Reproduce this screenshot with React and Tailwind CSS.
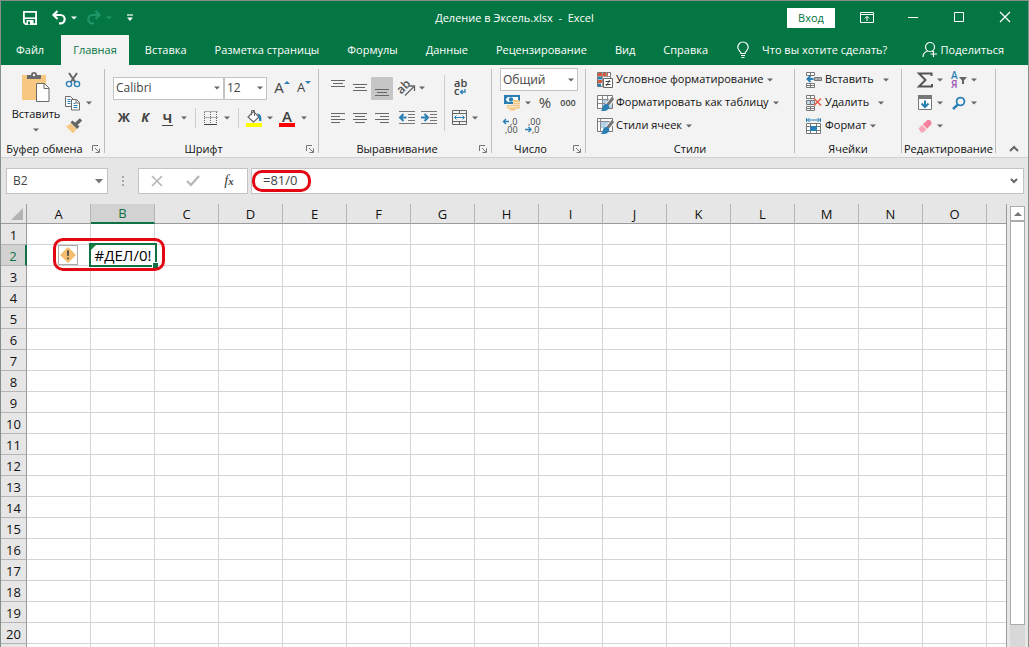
import React from 'react';

const TABS = ['Файл', 'Главная', 'Вставка', 'Разметка страницы', 'Формулы', 'Данные', 'Рецензирование', 'Вид', 'Справка'];
const COLUMNS = 'ABCDEFGHIJKLMNO'.split('');
const ROWS = Array.from({ length: 20 }, (_, i) => i + 1);

const Svg = ({ w = 16, h = 16, children }) => (
  <svg width={w} height={h} viewBox={`0 0 ${w} ${h}`} fill="none" className="shrink-0 overflow-visible" aria-hidden="true">
    {children}
  </svg>
);

const CaretIcon = ({ color = '#666' }) => (
  <Svg w={6} h={4}>
    <path d="M0 0.5h6L3 3.5z" fill={color} />
  </Svg>
);

const Caret = ({ label = 'Ещё' }) => (
  <button type="button" aria-label={label} className="flex w-2 h-5 shrink-0 items-center justify-center">
    <CaretIcon />
  </button>
);

const Tool = ({ label, className = 'w-[22px] items-center', children }) => (
  <button type="button" aria-label={label} className={`flex h-[23px] shrink-0 justify-center text-[#444] ${className}`}>
    {children}
  </button>
);

/* ---------- icons ---------- */

const SaveIcon = () => (
  <Svg>
    <path d="M1.9 1.9h12.2v12.2H3.5l-1.6-1.6z" stroke="#fff" strokeWidth="1.8" />
    <path d="M2 8.2h12" stroke="#fff" strokeWidth="1.6" />
    <path d="M4.5 10h7v4.5h-7z" fill="#fff" />
    <path d="M6 11.5h2v3H6z" fill="#037643" />
  </Svg>
);

const UndoIcon = () => (
  <Svg>
    <path d="M6.5 1 2.5 5l4 4M3 5h6.5a4.2 4.2 0 0 1 0 8.4H8" stroke="#fff" strokeWidth="2.2" />
  </Svg>
);

const RedoIcon = () => (
  <Svg>
    <path d="M9.5 1l4 4-4 4M13 5H6.5a4.2 4.2 0 0 0 0 8.4H8" stroke="#1f9668" strokeWidth="2.2" />
  </Svg>
);

const QuickMenuIcon = () => (
  <Svg w={8} h={8}>
    <path d="M1 1h6" stroke="#fff" strokeWidth="1.2" />
    <path d="M1 3.5h6L4 7z" fill="#fff" />
  </Svg>
);

const RibbonOptionsIcon = () => (
  <Svg w={14} h={12}>
    <path d="M.5.5h13v10H.5zM.5 2.500h13M7 9V4.500M4.800 6.500 7 4.300l2.200 2.200" stroke="#fff" />
  </Svg>
);

const BulbIcon = () => (
  <Svg w={14} h={18}>
    <path d="M5 12.500c0-2-3.200-3-3.200-6.300a5.200 5.200 0 0 1 10.400 0c0 3.300-3.200 4.300-3.200 6.300zM5 14.500h4M5.500 16.500h3" stroke="#fff" strokeWidth="1.200" />
  </Svg>
);

const ShareIcon = () => (
  <Svg w={16} h={18}>
    <circle cx="8" cy="6" r="4.500" stroke="#fff" strokeWidth="1.200" />
    <path d="M1 16c0-3 2-5.200 4.800-6M10 10l1.500 1M11.500 10v6M8.500 13h6.500" stroke="#fff" strokeWidth="1.200" />
  </Svg>
);

const PasteIcon = () => (
  <Svg w={28} h={30}>
    <path d="M0 3h24v25H0z" fill="#f8c881" />
    <path d="M5 7V3h4a3 3 0 0 1 6 0h4v4z" fill="#6a6a6a" />
    <circle cx="12" cy="3" r="1.200" fill="#f3f3f3" />
    <path d="M14.500 11.500h8l4.500 4.500v13.500H14.500z" fill="#fff" stroke="#6a6a6a" />
    <path d="M22 11.500V16.500h5" stroke="#6a6a6a" />
  </Svg>
);

const CutIcon = () => (
  <Svg>
    <path d="M4 1l6.500 9.500M12 1 5.500 10.500" stroke="#666" strokeWidth="2" />
    <circle cx="4" cy="12" r="2.600" stroke="#2a80b5" strokeWidth="1.400" />
    <circle cx="12" cy="12" r="2.600" stroke="#2a80b5" strokeWidth="1.400" />
  </Svg>
);

const CopyIcon = () => (
  <Svg>
    <path d="M.5 1.500h5l2.500 2.500v7.500H.500z" fill="#fff" stroke="#6a6a6a" />
    <path d="M2.500 4.500h3M2.500 6.500h3M2.500 8.500h3" stroke="#2a80b5" />
    <path d="M6.500 4.500h5l3 3v7.500h-8z" fill="#fff" stroke="#6a6a6a" />
    <path d="M11 4.500v3.500h3.500" stroke="#6a6a6a" />
    <path d="M8.500 8.500h2M8.500 10.500h4M8.500 12.500h4" stroke="#2a80b5" />
  </Svg>
);

const BrushIcon = () => (
  <Svg>
    <path d="M0 8.500l5-3 5.500 5.500L7 15.500z" fill="#f8c881" />
    <path d="M4.500 4.500l2-2 7 6-2.500 2.500z" fill="#666" />
    <path d="M9.500 6.500 15 1.500" stroke="#666" strokeWidth="3.400" />
  </Svg>
);

const LauncherIcon = () => (
  <Svg w={8} h={8}>
    <path d="M.5 6V.5H6M3 3l4 4M7.500 3.500v4h-4" stroke="#777" />
  </Svg>
);

const GrowFontIcon = ({ shrink }) => (
  <Svg w={6} h={4}>
    <path d={shrink ? 'M0 0h6L3 3z' : 'M0 3h6L3 0z'} fill="#2a80b5" />
  </Svg>
);

const BordersIcon = () => (
  <Svg w={14} h={14}>
    <path d="M.5.5h13M.5 6.500h13M.5 1v12M6.500 1v12M12.500 1v12" stroke="#666" strokeDasharray="1 1" />
    <path d="M0 13.500h13" stroke="#444" />
  </Svg>
);

const FillIcon = () => (
  <Svg w={16} h={18}>
    <path d="M7.500 2.500 13 8l-5.500 5L2 8z" fill="#fff" stroke="#666" strokeWidth="1.200" />
    <path d="M5.500 6V1.500h3V7" stroke="#666" />
    <path d="M11 4.500c3.500 0 5 3 4.300 7.500l-2.300 0V8z" fill="#2a80b5" />
    <path d="M0 14h16v4H0z" fill="#ffff00" />
  </Svg>
);

const LINES = {
  top: [[1, 0, 14], [4, 2, 12], [7, 0, 14]],
  middle: [[5, 0, 14], [8, 2, 12], [11, 0, 14]],
  bottom: [[10, 0, 14], [13, 2, 12], [16, 0, 14]],
  left: [[4, 0, 14], [7, 0, 9], [10, 0, 14], [13, 0, 9]],
  center: [[4, 0, 14], [7, 2, 12], [10, 0, 14], [13, 2, 12]],
  right: [[4, 0, 14], [7, 5, 14], [10, 0, 14], [13, 5, 14]],
};

const AlignIcon = ({ kind }) => (
  <Svg w={14} h={16}>
    {LINES[kind].map(([y, a, b]) => (
      <path key={y} d={`M${a} ${y - 0.5}H${b}`} stroke="#666" />
    ))}
  </Svg>
);

const OrientationIcon = () => (
  <Svg w={18} h={18}>
    <text x="0" y="12" fontSize="12" fontFamily="Open Sans, sans-serif" fontWeight="600" fill="#555" transform="rotate(-45 6 10)">ab</text>
    <path d="M7 16.500 16 7.500M11.500 7H16.500v5" stroke="#666" strokeWidth="1.300" />
  </Svg>
);

const IndentIcon = ({ out }) => (
  <Svg>
    <path d="M0 1.500h16M9 4.500h7M9 7.500h7M9 10.500h7M0 13.500h16" stroke="#777" />
    <path d={out ? 'M7.500 7.500H2M4.500 4 1 7.500 4.500 11' : 'M0 7.500h5.500M3.500 4 7 7.500 3.500 11'} stroke="#2a80b5" strokeWidth="2" />
  </Svg>
);

const WrapIcon = () => (
  <Svg w={14} h={18}>
    <text x="1" y="8" fontSize="11" fontFamily="Open Sans, sans-serif" fontWeight="600" fill="#444">ab</text>
    <text x="1" y="16" fontSize="11" fontFamily="Open Sans, sans-serif" fontWeight="600" fill="#444">c</text>
    <path d="M12 10v3H8M9.500 11 7.500 13l2 2" stroke="#2a80b5" strokeWidth="1.300" />
  </Svg>
);

const MergeIcon = () => (
  <Svg>
    <path d="M.5.5h14v14H.5zM.5 3.500h14M.5 11.500h14M7.500.5v3M7.500 11.500v3" stroke="#666" />
    <path d="M2.500 7.500h10M4.500 5.500l-2 2 2 2M10.500 5.500l2 2-2 2" stroke="#2a80b5" />
  </Svg>
);

const MoneyIcon = () => (
  <Svg>
    <path d="M0 0h16v9H0z" fill="#2a80b5" />
    <path d="M2 2h12v5H2z" fill="#fff" />
    <path d="M2 2h2L2 4zM2 7V5l2 2z" fill="#2a80b5" />
    <circle cx="7" cy="4.500" r="2.200" fill="#2a80b5" />
    <path d="M9 5h6l1 1.500V13l-3 1H4l-1-1v-3h6z" fill="#f8c881" />
    <path d="M9 7.500h7M9 9.500h7M4 11.500h12M4 13h9" stroke="#f3f3f3" strokeWidth=".6" />
    <path d="M5 13.500h7l-1 2H6z" fill="#f8c881" />
  </Svg>
);

const DecimalIcon = ({ less }) => (
  <Svg w={16} h={16}>
    <text x={less ? 3 : 7} y="7" fontSize="9" fontFamily="Open Sans, sans-serif" fill="#444">{less ? ',00' : ',0'}</text>
    <text x={less ? 7 : 2} y="15" fontSize="9" fontFamily="Open Sans, sans-serif" fill="#444">{less ? ',0' : ',00'}</text>
    <path d={less ? 'M0 11.500h5.500M3.500 9 6 11.500 3.500 14' : 'M6 3.500H.800M3 1 .500 3.500 3 6'} stroke="#2a80b5" strokeWidth="1.400" />
  </Svg>
);

const ConditionalIcon = () => (
  <Svg>
    <path d="M.5.5h13v14H.500z" fill="#fff" stroke="#777" />
    <path d="M1 1h4v3H1zM6 1h5v3H6zM1 8h4v3H1z" fill="#d9593d" />
    <path d="M1 4.500h4v3H1zM1 11.500h3v3H1z" fill="#2a80b5" />
    <path d="M5.500 0v14M9.500 0v5M0 4.500h14" stroke="#999" />
    <path d="M6.500 6.500h9v9h-9z" fill="#fff" stroke="#666" />
    <path d="M8.500 9.500h5M8.500 12.500h5M12.500 8l-3 6" stroke="#444" />
  </Svg>
);

const TableStyleIcon = ({ cell }) => (
  <Svg>
    <path d="M.5.500h15v13H.500z" fill="#fff" stroke="#777" />
    <path d={cell ? 'M4 4h8v6H4z' : 'M5 5h10v8H5z'} fill="#b5d1e6" />
    <path d={cell ? 'M.5 3.500h15M3.500.500v13' : 'M.5 4.500h15M.5 8.500h15M5.500.500v13M10.500.500v13'} stroke="#8a8a8a" />
    <path d="M16 3.500 10 10.500" stroke="#f3f3f3" strokeWidth="5" />
    <path d="M16 3 10.500 10" stroke="#777" strokeWidth="3" />
    <path d="M8.500 9c2-.5 4.500 1.500 3.700 4-.8 2.200-4 3.500-8.700 3C6.500 14.500 5 10 8.500 9z" fill="#2a80b5" />
  </Svg>
);

const CellsIcon = ({ kind }) => (
  <Svg>
    <path d="M.5.500h8v3h-8zM4.500.500v3M.5 11.500h8v4h-8zM4.500 11.500v4M.5 13.500h8" fill="#fff" stroke="#777" />
    {kind === 'insert' ? (
      <>
        <path d="M8.500 5.500h7v3h-7zM12 5.500v3" fill="#bbb" stroke="#777" />
        <path d="M7.500 7H1.500M4.500 4l-3 3 3 3" stroke="#2a80b5" strokeWidth="2" />
      </>
    ) : (
      <>
        <path d="M.5 5.500h8v4h-8zM4.500 5.500v4" fill="#c3d9ea" stroke="#777" />
        <path d="M8 3.500l7 7M15 3.500l-7 7" stroke="#e8604c" strokeWidth="1.700" />
      </>
    )}
  </Svg>
);

const FormatIcon = () => (
  <Svg>
    <path d="M1.500 2h12M3.500 0 1.500 2l2 2M11.500 0l2 2-2 2M.5 0v4M14.500 0v4" stroke="#2a80b5" />
    <path d="M.5 5.500h14v10H.500zM.5 8.500h14M.5 12.500h14M4.500 5.500v10M10.500 5.500v10" fill="#fff" stroke="#777" />
    <path d="M4 8h7v5H4z" fill="#2a80b5" />
  </Svg>
);

const SumIcon = () => (
  <Svg>
    <path d="M14.500 4V1.500H2L8.500 8 2 14.500h13V12" stroke="#555" strokeWidth="2" />
  </Svg>
);

const FillDownIcon = () => (
  <Svg w={14} h={16}>
    <path d="M.5.500h13v14H.500z" fill="#fff" stroke="#777" />
    <path d="M0 0h14v4H0z" fill="#777" />
    <path d="M7 5.500V12M3.500 8.500 7 12l3.500-3.500" stroke="#2a80b5" strokeWidth="2" />
  </Svg>
);

const EraserIcon = () => (
  <Svg w={14} h={14}>
    <path d="M.5 9.500 4 6l4.500 4.500L5 13.500H3z" fill="#f7a6ba" />
    <path d="M4.800 5.300 9.500 1H12l1.500 2.500V5L9.200 9.700z" fill="#f4829f" />
  </Svg>
);

const SortIcon = () => (
  <Svg w={16} h={18}>
    <text x="0" y="8" fontSize="10" fontWeight="600" fontFamily="Open Sans, sans-serif" fill="#2a80b5">А</text>
    <text x="0" y="17" fontSize="10" fontWeight="600" fontFamily="Open Sans, sans-serif" fill="#9a55b5">Я</text>
    <path d="M8 6h8l-3 3.500V13h-2V9.500z" fill="#666" />
  </Svg>
);

const SearchIcon = () => (
  <Svg w={14} h={14}>
    <circle cx="8.500" cy="5.500" r="3.900" stroke="#2a80b5" strokeWidth="1.800" />
    <path d="M6 8.500 1 13" stroke="#2a80b5" strokeWidth="2.400" />
  </Svg>
);

const ChevronIcon = ({ up }) => (
  <Svg w={10} h={8}>
    <path d={up ? 'M1 6l4-4 4 4' : 'M2 2l3 3 3-3'} stroke="#666" strokeWidth="2" />
  </Svg>
);

/* ---------- ribbon ---------- */

const Group = ({ title, launcher, className, children }) => (
  <>
    <section aria-label={title} className={`flex shrink-0 flex-col ${className}`}>
      <div className="flex-1">{children}</div>
      <div className="flex h-4 items-center">
        <span className={`flex-1 text-center whitespace-nowrap ${launcher ? 'pr-1' : ''}`}>{title}</span>
        {launcher && (
          <button type="button" aria-label={`${title}: параметры`} className="w-3">
            <LauncherIcon />
          </button>
        )}
      </div>
    </section>
    <div className="my-1 w-px shrink-0 bg-[#bdbdbd]" />
  </>
);

const Row = ({ tall, className = '', children }) => (
  <div className={`flex items-center ${tall ? 'h-[30px]' : 'h-[23px]'} ${className}`}>{children}</div>
);

const Divider = () => <div className="mr-[3px] ml-[7px] h-5 w-px bg-[#cfcfcf]" />;

const Select = ({ label, value, className }) => (
  <div className={`relative h-[23px] shrink-0 text-xs ${className}`}>
    <select aria-label={label} defaultValue={value} className="h-full w-full appearance-none border border-[#c3c3c3] bg-white pl-[2px] text-[#444]">
      <option>{value}</option>
    </select>
    <span className="pointer-events-none absolute inset-y-0 right-1 flex items-center">
      <CaretIcon />
    </span>
  </div>
);

const MenuButton = ({ icon, text, gap = 'gap-1' }) => (
  <button type="button" className="flex h-[23px] items-center gap-[3px] whitespace-nowrap">
    {icon}
    <span className={`flex items-center ${gap}`}>
      {text}
      <CaretIcon />
    </span>
  </button>
);

const Ribbon = () => (
  <div className="flex h-[93px] shrink-0 border-b border-[#d0d0d0] bg-[#f3f3f3] text-[#111]">
    <Group title="Буфер обмена" launcher className="w-[103px]">
      <div className="flex pt-[3px]">
        <button type="button" className="flex w-[62px] flex-col items-center pt-1 pl-2">
          <PasteIcon />
          <span className="pt-1 leading-4">Вставить</span>
          <span className="flex h-4 items-center">
            <CaretIcon />
          </span>
        </button>
        <div>
          <Row><Tool label="Вырезать" className="w-5 items-center"><CutIcon /></Tool></Row>
          <Row className="gap-[2px]">
            <Tool label="Копировать" className="w-5 items-center"><CopyIcon /></Tool>
            <Caret label="Параметры копирования" />
          </Row>
          <Row><Tool label="Формат по образцу"><BrushIcon /></Tool></Row>
        </div>
      </div>
    </Group>

    <Group title="Шрифт" launcher className="w-[213px]">
      <div className="pt-2 pl-2">
        <Row tall>
          <Select label="Шрифт" value="Calibri" className="w-[111px]" />
          <Select label="Размер шрифта" value="12" className="w-[43px]" />
          <Tool label="Увеличить размер шрифта" className="ml-1 w-[22px] items-start">
            <span className="text-[15px] leading-5 font-medium">A</span>
            <span className="pt-1"><GrowFontIcon /></span>
          </Tool>
          <Tool label="Уменьшить размер шрифта" className="w-[22px] items-start">
            <span className="text-[13px] leading-5 font-medium">A</span>
            <span className="pt-1"><GrowFontIcon shrink /></span>
          </Tool>
        </Row>
        <Row tall>
          <Tool label="Полужирный"><span className="text-[13px] font-bold">Ж</span></Tool>
          <Tool label="Курсив" className="w-5 items-center"><span className="text-[13px] font-bold italic">К</span></Tool>
          <Tool label="Подчёркнутый" className="w-[25px] items-center">
            <span className="border-b border-[#444] px-px text-[13px] leading-[14px] font-bold">Ч</span>
          </Tool>
          <Caret />
          <Divider />
          <Tool label="Границы" className="w-6 items-center"><BordersIcon /></Tool>
          <Caret />
          <Divider />
          <Tool label="Цвет заливки" className="w-6 items-center"><FillIcon /></Tool>
          <Caret />
          <Tool label="Цвет текста" className="w-[26px] items-center">
            <span className="flex w-4 justify-center border-b-4 border-[#fe0000] text-[15px] leading-[14px] font-semibold">A</span>
          </Tool>
          <Caret />
        </Row>
      </div>
    </Group>

    <Group title="Выравнивание" launcher className="w-[172px]">
      <div className="flex pt-2 pl-2">
        <div className="w-[117px]">
          <Row tall>
            <Tool label="По верхнему краю"><AlignIcon kind="top" /></Tool>
            <Tool label="По середине"><AlignIcon kind="middle" /></Tool>
            <Tool label="По нижнему краю" className="w-[22px] items-center bg-[#c6c6c6]"><AlignIcon kind="bottom" /></Tool>
            <Tool label="Ориентация" className="ml-[3px] w-[22px] items-center"><OrientationIcon /></Tool>
            <Caret />
          </Row>
          <Row tall>
            <Tool label="По левому краю"><AlignIcon kind="left" /></Tool>
            <Tool label="По центру"><AlignIcon kind="center" /></Tool>
            <Tool label="По правому краю"><AlignIcon kind="right" /></Tool>
            <Tool label="Уменьшить отступ" className="ml-[3px] w-[22px] items-center"><IndentIcon out /></Tool>
            <Tool label="Увеличить отступ"><IndentIcon /></Tool>
          </Row>
        </div>
        <div className="my-[2px] w-px bg-[#cfcfcf]" />
        <div className="pl-1">
          <Row tall><Tool label="Перенести текст"><WrapIcon /></Tool></Row>
          <Row tall>
            <Tool label="Объединить и поместить в центре"><MergeIcon /></Tool>
            <Caret />
          </Row>
        </div>
      </div>
    </Group>

    <Group title="Число" launcher className="w-[93px]">
      <div className="pt-[3px] pl-2">
        <Select label="Числовой формат" value="Общий" className="w-[78px]" />
        <Row>
          <Tool label="Финансовый формат" className="w-6 items-center"><MoneyIcon /></Tool>
          <Caret />
          <Tool label="Процентный формат" className="w-[26px] items-center"><span className="text-[15px]">%</span></Tool>
          <Tool label="Формат с разделителями" className="w-5 items-center"><span className="text-[9px] font-semibold">000</span></Tool>
        </Row>
        <Row>
          <Tool label="Увеличить разрядность"><DecimalIcon /></Tool>
          <Tool label="Уменьшить разрядность"><DecimalIcon less /></Tool>
        </Row>
      </div>
    </Group>

    <Group title="Стили" className="w-[208px]">
      <div className="pt-[3px] pl-[11px]">
        <MenuButton icon={<ConditionalIcon />} text="Условное форматирование" />
        <MenuButton icon={<TableStyleIcon />} text="Форматировать как таблицу" />
        <MenuButton icon={<TableStyleIcon cell />} text="Стили ячеек" />
      </div>
    </Group>

    <Group title="Ячейки" className="w-[106px]">
      <div className="pt-[3px] pl-[11px]">
        <MenuButton icon={<CellsIcon kind="insert" />} text="Вставить" gap="gap-[9px]" />
        <MenuButton icon={<CellsIcon kind="delete" />} text="Удалить" gap="gap-[9px]" />
        <MenuButton icon={<FormatIcon />} text="Формат" />
      </div>
    </Group>

    <Group title="Редактирование" className="w-[93px]">
      <div className="pt-[3px] pl-3">
        <Row>
          <Tool label="Сумма"><SumIcon /></Tool>
          <Caret />
          <Tool label="Сортировка и фильтр" className="ml-1 w-[22px] items-center"><SortIcon /></Tool>
          <Caret />
        </Row>
        <Row>
          <Tool label="Заполнить"><FillDownIcon /></Tool>
          <Caret />
          <Tool label="Найти и выделить" className="ml-1 w-[22px] items-center"><SearchIcon /></Tool>
          <Caret />
        </Row>
        <Row>
          <Tool label="Очистить"><EraserIcon /></Tool>
          <Caret />
        </Row>
      </div>
    </Group>

    <div className="flex flex-1 items-end justify-end pr-[9px] pb-1">
      <button type="button" aria-label="Свернуть ленту"><ChevronIcon up /></button>
    </div>
  </div>
);

/* ---------- window chrome ---------- */

const TitleBar = () => (
  <header className="grid h-[34px] shrink-0 grid-cols-[1fr_auto_1fr] items-center">
    <div className="flex items-center pl-[21px]">
      <button type="button" aria-label="Сохранить"><SaveIcon /></button>
      <button type="button" aria-label="Отменить" className="ml-[13px] flex items-center gap-1"><UndoIcon /><CaretIcon color="#fff" /></button>
      <button type="button" aria-label="Вернуть" className="ml-[9px] flex items-center gap-1"><RedoIcon /><CaretIcon color="#1f9668" /></button>
      <button type="button" aria-label="Настройка панели" className="ml-[14px]"><QuickMenuIcon /></button>
    </div>
    <h1 className="whitespace-pre">Деление в Эксель.xlsx  -  Excel</h1>
    <div className="flex items-center justify-end">
      <button type="button" className="mr-[9px] h-5 w-12 bg-white text-[#037643]">Вход</button>
      <button type="button" aria-label="Параметры ленты" className="flex w-[46px] justify-center"><RibbonOptionsIcon /></button>
      <button type="button" aria-label="Свернуть" className="flex w-[46px] justify-center">
        <Svg w={10} h={10}><path d="M0 4.500h10" stroke="#fff" /></Svg>
      </button>
      <button type="button" aria-label="Развернуть" className="flex w-[46px] justify-center">
        <Svg w={10} h={10}><path d="M.5-.5h9v9h-9z" stroke="#fff" /></Svg>
      </button>
      <button type="button" aria-label="Закрыть" className="flex w-[46px] justify-center">
        <Svg w={10} h={10}><path d="M0-1l10 10M10-1 0 9" stroke="#fff" strokeWidth="1.200" /></Svg>
      </button>
    </div>
  </header>
);

const TabBar = () => (
  <nav className="flex h-[30px] shrink-0 pl-[3px]">
    {TABS.map((tab) => (
      <button
        key={tab}
        type="button"
        className={`mr-1 px-3 whitespace-nowrap ${tab === 'Главная' ? 'ml-px bg-[#f3f3f3] text-[#037643]' : ''}`}
      >
        {tab}
      </button>
    ))}
    <button type="button" className="ml-3 flex items-center gap-3 whitespace-nowrap"><BulbIcon />Что вы хотите сделать?</button>
    <button type="button" className="mr-6 ml-auto flex items-center gap-[3px]"><ShareIcon />Поделиться</button>
  </nav>
);

const FormulaBar = () => (
  <div className="flex h-[46px] shrink-0 items-center bg-[#e6e6e6] pr-1 pl-[5px] text-xs text-[#444]">
    <div className="flex h-[26px] w-[102px] items-center border border-[#c3c3c3] bg-white pr-1 pl-[6px]">
      <input aria-label="Имя ячейки" defaultValue="B2" className="w-full min-w-0 bg-transparent outline-none" />
      <button type="button" aria-label="Список имён">
        <Svg w={8} h={5}><path d="M0 0h8L4 4.500z" fill="#777" /></Svg>
      </button>
    </div>
    <div className="flex w-[30px] justify-center">
      <Svg w={2} h={12}><path d="M0 1h2v2H0zM0 5h2v2H0zM0 9h2v2H0z" fill="#aaa" /></Svg>
    </div>
    <div className="flex h-[26px] w-[110px] items-center border border-[#c3c3c3] bg-white">
      <button type="button" aria-label="Отмена" className="flex w-9 justify-center">
        <Svg w={12} h={12}><path d="M1 1l10 10M11 1 1 11" stroke="#b5b5b5" strokeWidth="1.600" /></Svg>
      </button>
      <button type="button" aria-label="Ввод" className="flex w-9 justify-center">
        <Svg w={14} h={12}><path d="M1 6l4 4 8-9" stroke="#b5b5b5" strokeWidth="2.200" /></Svg>
      </button>
      <button type="button" aria-label="Вставить функцию" className="w-9 font-['Liberation_Serif',serif] text-[15px] italic">
        f<span className="text-[11px] font-bold">x</span>
      </button>
    </div>
    <div className="relative ml-[3px] flex h-[26px] flex-1 items-center border border-[#c3c3c3] bg-white pr-1 pl-[11px]">
      <input aria-label="Строка формул" defaultValue="=81/0" className="min-w-0 flex-1 bg-transparent text-[13px] outline-none" />
      <button type="button" aria-label="Развернуть строку формул"><ChevronIcon /></button>
      <span className="pointer-events-none absolute top-px left-0 h-[22px] w-[59px] rounded-[10px] border-3 border-[#e30613]" />
    </div>
  </div>
);

const ErrorHint = () => (
  <>
    <button type="button" aria-label="Ошибка деления на ноль" className="absolute top-0 right-3 flex size-5 items-center justify-center border border-[#ababab] bg-white">
      <Svg>
        <path d="M8 0l8 8-8 8-8-8z" fill="#f5bd6f" />
        <path d="M7 3.500h2L8.700 9H7.300zM7.200 10.500h1.600v1.700H7.200z" fill="#444" />
      </Svg>
    </button>
    <span className="pointer-events-none absolute -top-[7px] left-[26px] z-20 h-[33px] w-[112px] rounded-[10px] border-3 border-[#e30613]" />
  </>
);

const SelectedCell = () => (
  <div className="absolute -top-[2px] -left-[2px] z-10 flex h-6 w-[68px] items-center justify-center border-2 border-[#107145] bg-white text-[15px] whitespace-nowrap text-black">
    <svg width="5" height="5" className="absolute top-0 left-0" aria-hidden="true"><path d="M0 0h5L0 5z" fill="#1a8a3a" /></svg>
    #ДЕЛ/0!
    <span className="absolute -right-[3px] -bottom-[3px] size-[6px] border-t border-l border-white bg-[#107145]" />
  </div>
);

const Sheet = () => (
  <table className="w-full table-fixed border-separate border-spacing-0 text-[13px] leading-4 text-[#111]">
    <colgroup>
      <col className="w-[26px]" />
      {COLUMNS.map((c) => <col key={c} className="w-16" />)}
      <col />
    </colgroup>
    <thead className="bg-[#e6e6e6]">
      <tr className="h-5">
        <th className="border-r border-b border-[#9b9b9b] p-0">
          <span className="flex justify-end pr-[3px]">
            <Svg w={12} h={12}><path d="M12 0v12H0z" fill="#b3b3b3" /></Svg>
          </span>
        </th>
        {COLUMNS.map((c) => (
          <th
            key={c}
            className={`border-r border-r-[#b5b5b5] p-0 font-normal ${c === 'B' ? 'border-b-2 border-b-[#107145] bg-[#d2d2d2] text-[#107145]' : 'border-b border-b-[#9b9b9b]'}`}
          >
            {c}
          </th>
        ))}
        <th className="border-b border-[#9b9b9b] p-0" />
      </tr>
    </thead>
    <tbody>
      {ROWS.map((r) => (
        <tr key={r} className="h-[21px]">
          <th
            className={`border-b border-b-[#b5b5b5] p-0 pt-px font-normal ${r === 2 ? 'border-r-2 border-r-[#107145] bg-[#d2d2d2] text-[#107145]' : 'border-r border-r-[#9b9b9b] bg-[#e6e6e6]'}`}
          >
            {r}
          </th>
          {COLUMNS.map((c) => (
            <td key={c} className="relative border-r border-b border-[#d4d4d4] p-0">
              {r === 2 && c === 'A' && <ErrorHint />}
              {r === 2 && c === 'B' && <SelectedCell />}
            </td>
          ))}
          <td className="border-b border-[#d4d4d4] p-0" />
        </tr>
      ))}
      <tr className="h-[21px]">
        <th className="border-r border-[#9b9b9b] bg-[#e6e6e6] p-0" />
        {COLUMNS.map((c) => <td key={c} className="border-r border-[#d4d4d4] p-0" />)}
        <td className="p-0" />
      </tr>
    </tbody>
  </table>
);

const ScrollBar = () => (
  <div className="flex w-[21px] shrink-0 flex-col bg-[#e6e6e6] px-[3px] pt-[2px]">
    <button type="button" aria-label="Прокрутить вверх" className="flex h-[15px] shrink-0 items-center justify-center border border-[#ababab] bg-white">
      <Svg w={8} h={4}><path d="M0 4h8L4 0z" fill="#777" /></Svg>
    </button>
    <div className="flex-1 border border-[#ababab] bg-white" />
    <div className="h-[22px] bg-[#d8d8d8]" />
  </div>
);

export default function App() {
  return (
    <div className="flex h-screen flex-col overflow-hidden border-x border-t border-[#85908a] bg-[#037643] font-['Open_Sans','Noto_Sans',sans-serif] text-[11px] text-white">
      <TitleBar />
      <TabBar />
      <Ribbon />
      <FormulaBar />
      <main className="flex min-h-0 flex-1">
        <div className="min-w-0 flex-1 overflow-hidden border-r border-[#9b9b9b] bg-white">
          <Sheet />
        </div>
        <ScrollBar />
      </main>
    </div>
  );
}
